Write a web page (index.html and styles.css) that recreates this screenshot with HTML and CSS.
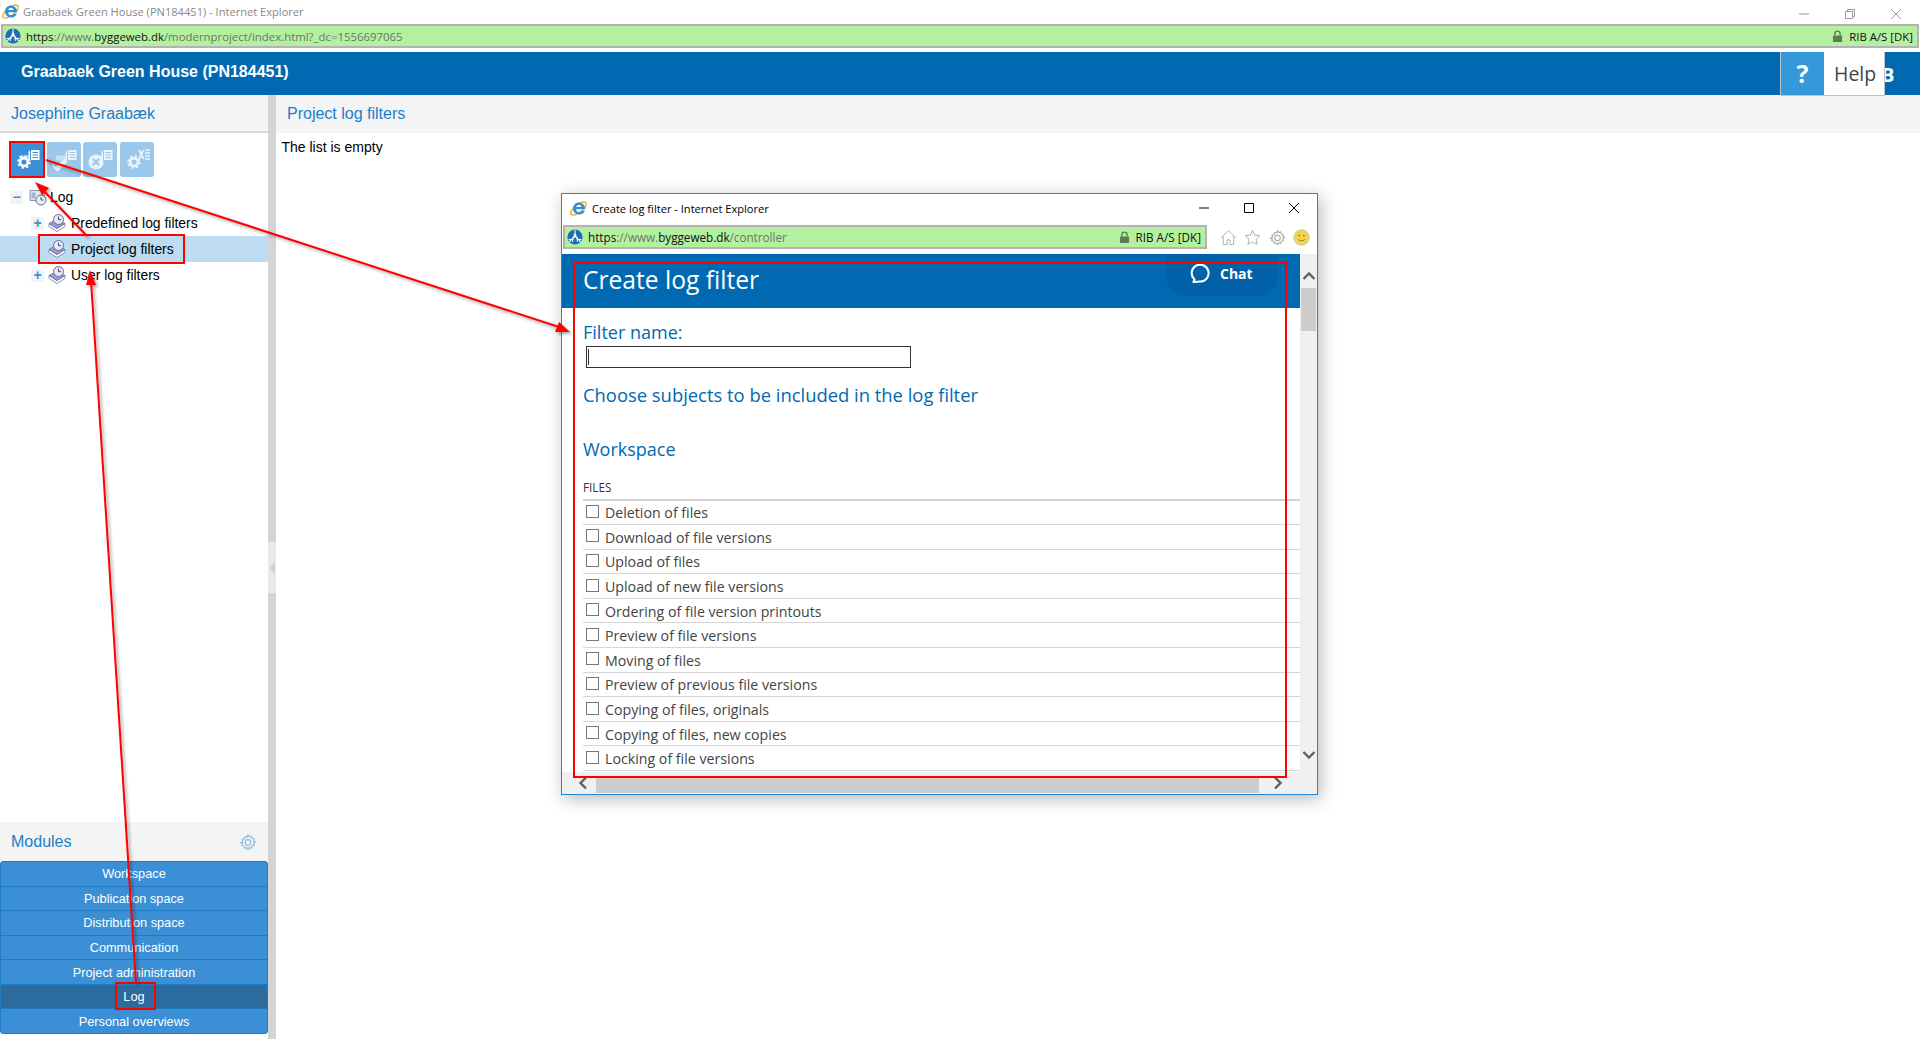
FILE: index.html
```html
<!DOCTYPE html>
<html lang="en">
<head>
<meta charset="utf-8">
<title>Graabaek Green House (PN184451) - Internet Explorer</title>
<link rel="stylesheet" href="styles.css">
</head>
<body>
<svg class="defs" width="0" height="0" aria-hidden="true">
  <defs>
    <symbol id="ie" viewBox="0 0 22 22">
      <ellipse cx="11" cy="11" rx="10.800" ry="4.600" transform="rotate(-38 11 11)" fill="none" stroke="#f0b429" stroke-width="1.700"/>
      <path d="M11.400 4a7.300 7.300 0 0 1 7.300 7.800H8.300c.1 2.100 1.500 3.400 3.400 3.400 1.400 0 2.400-.6 3-1.700h3.700c-.9 2.700-3.500 4.500-6.700 4.500-4.100 0-7-2.900-7-6.900S7.600 4 11.400 4zM8.400 9.300h6c-.2-1.700-1.400-2.700-3-2.700s-2.700 1-3 2.700z" fill="#2f8fd8" fill-rule="evenodd"/>
    </symbol>
    <symbol id="rib" viewBox="0 0 20 20">
      <circle cx="10" cy="10" r="9.500" fill="#1f6fb5"/>
      <path d="M10 1v7L3 16M10 8l7 8M10 5l-3.500 11M10 5l3.500 11M2 13c3 .5 5 .2 8-4 3 4.200 5 4.500 8 4" fill="none" stroke="#fff" stroke-width="1.300"/>
    </symbol>
    <symbol id="cog" viewBox="0 0 20 20">
      <path d="M10 1.800l1.300 2.300 2.500-.7.600 2.500 2.500.6-.7 2.500 2.300 1-2.300 1.300.7 2.500-2.500.6-.6 2.500-2.500-.7-1.300 2.300-1.300-2.300-2.500.7-.6-2.500-2.500-.6.7-2.500L1.800 11l2.300-1.300-.7-2.500 2.500-.6.6-2.500 2.500.7z" fill="none" stroke="currentColor" stroke-width="1.300" stroke-linejoin="round"/>
      <circle cx="10" cy="10.500" r="3.200" fill="none" stroke="currentColor" stroke-width="1.300"/>
    </symbol>
    <symbol id="book" viewBox="0 0 18 18">
      <path d="M1 9.500v3l8 5 8-5v-3l-8 5z" fill="#fff" stroke="#7474a8" stroke-width=".8"/>
      <path d="M1 9.500l7-4 9 4-8 5z" fill="#9c9cd2" stroke="#6a6aa0" stroke-width=".8"/>
      <circle cx="10.500" cy="5.500" r="5" fill="#e8e8f4" stroke="#6a6a9c"/>
      <path d="M10.500 2.500v3.200h2.600" fill="none" stroke="#45457a"/>
    </symbol>
    <symbol id="page" viewBox="0 0 34 34">
      <path d="M18.500 9.500l1.500-1V19l-1.500 1zM21 8h8.500v10H21z" fill="#fff"/>
      <path d="M22.500 10.500h5.500M22.500 13h5.500M22.500 15.500h5.500" stroke="currentColor" stroke-width="1.100"/>
      <path d="M9 13.500h10v5H9z" fill="#fff" opacity=".55"/>
    </symbol>
    <symbol id="gear" viewBox="0 0 34 34">
      <circle cx="14" cy="20" r="5.500" fill="currentColor"/>
      <circle cx="14" cy="20" r="3.900" fill="none" stroke="#fff" stroke-width="2.700"/>
      <circle cx="14" cy="20" r="6" fill="none" stroke="#fff" stroke-width="1.700" stroke-dasharray="2.350 2.360"/>
    </symbol>
  </defs>
</svg>

<div class="app">
  <div class="ie-title">
    <svg class="ie-logo"><use href="#ie"/></svg>
    <span class="ie-title-text">Graabaek Green House (PN184451) - Internet Explorer</span>
    <div class="win-btns">
      <svg class="win-btn" viewBox="0 0 12 12"><path d="M1 6h10" stroke="#999"/></svg>
      <svg class="win-btn" viewBox="0 0 12 12"><path d="M1.500 3.500h7v7h-7zM3.500 3.500v-2h7v7h-2" fill="none" stroke="#999"/></svg>
      <svg class="win-btn" viewBox="0 0 12 12"><path d="M1 1l10 10M11 1L1 11" stroke="#999"/></svg>
    </div>
  </div>
  <div class="addr">
    <svg class="rib-logo"><use href="#rib"/></svg>
    <span class="url"><b>https</b>://www.<b>byggeweb.dk</b>/modernproject/index.html?_dc=1556697065</span>
    <svg class="lock" viewBox="0 0 12 14"><path d="M1 6h10v7H1z" fill="#5d7d50"/><path d="M3.200 6V4a2.800 2.800 0 0 1 5.600 0v2" fill="none" stroke="#5d7d50" stroke-width="1.500"/></svg>
    <span class="cert">RIB A/S [DK]</span>
  </div>
  <header class="top">
    <h1 class="top-title">Graabaek Green House (PN184451)</h1>
    <span class="top-b">B</span>
    <div class="help">
      <span class="help-q">?</span>
      <span class="help-label">Help</span>
    </div>
  </header>

  <div class="main">
    <aside class="side">
      <div class="panel-head side-head">Josephine Graabæk</div>
      <div class="tools">
        <span class="tool tool-on"><svg class="tool-ico"><use href="#page"/><use href="#gear"/></svg></span>
        <span class="tool">
          <svg class="tool-ico tool-off"><use href="#page"/><path d="M8 25.500l9-9 3 3-9 9zM6 22a8 8 0 0 0 5 7" fill="#fff" stroke="#fff"/><path d="M9 24.500l8-8" stroke="currentColor"/></svg>
        </span>
        <span class="tool">
          <svg class="tool-ico tool-off"><use href="#page"/><circle cx="13" cy="20" r="7.500" fill="#fff"/><path d="M9.800 16.800l6.400 6.400M16.200 16.800l-6.400 6.400" stroke="currentColor" stroke-width="2.200"/></svg>
        </span>
        <span class="tool">
          <svg class="tool-ico tool-off"><use href="#gear"/><path d="M19 8l4.500 9M23.500 8L19 17" stroke="#fff" stroke-width="1.800"/><path d="M25 8h5M25 11h5M25 14h5M25 17h5" stroke="#fff" stroke-width="1.500"/></svg>
        </span>
      </div>
      <ul class="tree">
        <li class="node node-root"><span class="exp">−</span><svg class="log-ico" viewBox="0 0 18 18"><path d="M1 2.500h14v10H1z" fill="#dfe6f4" stroke="#8a93b0"/><path d="M2.500 4.500h4v6h-4z" fill="#9fb2dc"/><circle cx="12" cy="12" r="5" fill="#eef2f8" stroke="#5a6a8a"/><path d="M12 9v3h2.500" fill="none" stroke="#36466a"/></svg><span>Log</span></li>
        <li class="node node-sub"><span class="exp">+</span><svg class="book-ico"><use href="#book"/></svg><span>Predefined log filters</span></li>
        <li class="node node-sub node-sel"><span class="exp exp-none"></span><svg class="book-ico"><use href="#book"/></svg><span>Project log filters</span></li>
        <li class="node node-sub"><span class="exp">+</span><svg class="book-ico"><use href="#book"/></svg><span>User log filters</span></li>
      </ul>
      <div class="mod-head">
        <span>Modules</span>
        <svg class="mod-cog"><use href="#cog"/></svg>
      </div>
      <nav class="mods">
        <a class="mod">Workspace</a>
        <a class="mod">Publication space</a>
        <a class="mod">Distribution space</a>
        <a class="mod">Communication</a>
        <a class="mod">Project administration</a>
        <a class="mod mod-on">Log</a>
        <a class="mod">Personal overviews</a>
      </nav>
    </aside>
    <div class="split"><span class="split-notch"><span class="split-arrow"></span></span></div>
    <main class="content">
      <div class="panel-head">Project log filters</div>
      <p class="empty">The list is empty</p>
    </main>
  </div>
</div>

<section class="popup">
  <div class="pop-title">
    <svg class="pop-logo"><use href="#ie"/></svg>
    <span class="pop-title-text">Create log filter - Internet Explorer</span>
    <div class="pop-btns">
      <svg class="pop-btn" viewBox="0 0 12 12"><path d="M1 6h10" stroke="#000"/></svg>
      <svg class="pop-btn" viewBox="0 0 12 12"><path d="M1.500 1.500h9v9h-9z" fill="none" stroke="#000"/></svg>
      <svg class="pop-btn" viewBox="0 0 12 12"><path d="M1 1l10 10M11 1L1 11" stroke="#000"/></svg>
    </div>
  </div>
  <div class="pop-bar">
    <div class="addr pop-addr">
      <svg class="rib-logo"><use href="#rib"/></svg>
      <span class="url"><b>https</b>://www.<b>byggeweb.dk</b>/controller</span>
      <svg class="lock" viewBox="0 0 12 14"><path d="M1 6h10v7H1z" fill="#5d7d50"/><path d="M3.200 6V4a2.800 2.800 0 0 1 5.600 0v2" fill="none" stroke="#5d7d50" stroke-width="1.500"/></svg>
      <span class="cert">RIB A/S [DK]</span>
    </div>
    <div class="pop-tools">
      <svg class="pop-tool" viewBox="0 0 18 18"><path d="M1 9.500L9 2l8 7.500M3.500 8v8.500h4v-5h3v5h4V8" fill="none" stroke="#aaa"/></svg>
      <svg class="pop-tool" viewBox="0 0 18 18"><path d="M9 1.500l2.300 5 5.400.6-4 3.700 1.100 5.400L9 13.500l-4.800 2.700 1.100-5.400-4-3.700 5.400-.6z" fill="none" stroke="#aaa"/></svg>
      <svg class="pop-tool pop-tool-cog"><use href="#cog"/></svg>
      <svg class="pop-tool" viewBox="0 0 18 18"><circle cx="9" cy="9" r="8.200" fill="#f5d34f" stroke="#c9c9a0"/><circle cx="6.500" cy="7" r="1" fill="#8a7a20"/><circle cx="11.500" cy="7" r="1" fill="#8a7a20"/><path d="M5.500 11c1.500 2 5.500 2 7 0" fill="none" stroke="#8a7a20"/></svg>
    </div>
  </div>
  <div class="pop-view">
    <div class="pop-main">
      <div class="pop-head">
        <h2 class="pop-h">Create log filter</h2>
        <div class="chat">
          <svg class="chat-ico" viewBox="0 0 22 22"><path d="M3 21c1.600-.7 2.100-1.900 1.800-3.100A9.300 9.300 0 1 1 11 20.400c-2 0-4.500.6-8 .6z" fill="none" stroke="#fff" stroke-width="2.300"/></svg>
          <span>Chat</span>
        </div>
      </div>
      <div class="pop-body">
        <h3 class="lbl">Filter name:</h3>
        <div class="field"><span class="caret"></span></div>
        <h3 class="lbl lbl-choose">Choose subjects to be included in the log filter</h3>
        <h3 class="lbl lbl-ws">Workspace</h3>
        <div class="group">FILES</div>
        <ul class="rows">
          <li class="row"><span class="box"></span>Deletion of files</li>
          <li class="row"><span class="box"></span>Download of file versions</li>
          <li class="row"><span class="box"></span>Upload of files</li>
          <li class="row"><span class="box"></span>Upload of new file versions</li>
          <li class="row"><span class="box"></span>Ordering of file version printouts</li>
          <li class="row"><span class="box"></span>Preview of file versions</li>
          <li class="row"><span class="box"></span>Moving of files</li>
          <li class="row"><span class="box"></span>Preview of previous file versions</li>
          <li class="row"><span class="box"></span>Copying of files, originals</li>
          <li class="row"><span class="box"></span>Copying of files, new copies</li>
          <li class="row"><span class="box"></span>Locking of file versions</li>
        </ul>
      </div>
    </div>
    <div class="vbar">
      <svg class="chev" viewBox="0 0 14 10"><path d="M1.500 8L7 2.500 12.500 8" fill="none" stroke="#606060" stroke-width="2.400"/></svg>
      <span class="vthumb"></span>
      <svg class="chev chev-end" viewBox="0 0 14 10"><path d="M1.500 2L7 7.500 12.500 2" fill="none" stroke="#606060" stroke-width="2.400"/></svg>
    </div>
    <div class="hbar">
      <svg class="hchev" viewBox="0 0 10 14"><path d="M8 1.500L2.500 7 8 12.500" fill="none" stroke="#606060" stroke-width="2.400"/></svg>
      <span class="hthumb"></span>
      <svg class="hchev" viewBox="0 0 10 14"><path d="M2 1.500L7.500 7 2 12.500" fill="none" stroke="#606060" stroke-width="2.400"/></svg>
    </div>
  </div>
</section>

<svg class="marks" viewBox="0 0 1920 1039" aria-hidden="true">
  <defs>
    <filter id="soft" x="-5%" y="-5%" width="110%" height="110%">
      <feDropShadow dx="2" dy="2" stdDeviation="1.500" flood-color="#000" flood-opacity=".35"/>
    </filter>
  </defs>
  <g fill="none" stroke="#f00" stroke-width="2">
    <rect x="10" y="142" width="34" height="35"/>
    <rect x="39" y="235" width="145" height="28"/>
    <rect x="116" y="983" width="39" height="26"/>
    <rect x="574" y="263" width="712" height="514"/>
  </g>
  <g filter="url(#soft)">
    <path d="M46 160L562 328" stroke="#f00" stroke-width="2" fill="none"/>
    <path d="M570 332L555 332L559 322z" fill="#f00"/>
    <path d="M87 236L41 188" stroke="#f00" stroke-width="2" fill="none"/>
    <path d="M35 182L49 188L42 195z" fill="#f00"/>
    <path d="M136 983L91 280" stroke="#f00" stroke-width="2" fill="none"/>
    <path d="M90 270L96 285L86 285z" fill="#f00"/>
  </g>
</svg>
</body>
</html>
```
FILE: styles.css
```css
* { box-sizing: border-box; }
html, body { margin: 0; height: 100%; overflow: hidden; background: #fff; }
body { position: relative; font-family: "Liberation Sans", Arial, sans-serif; font-size: 14px; color: #000; }
ul { list-style: none; margin: 0; padding: 0; }
h1, h2, h3, p { margin: 0; font-weight: normal; }
.defs { position: absolute; }

.app { display: flex; flex-direction: column; height: 1039px; }

.ie-title { display: flex; align-items: center; height: 24px; padding-left: 1px; flex: none; }
.ie-logo { width: 19px; height: 19px; margin-right: 3px; margin-top: -2px; }
.ie-title-text { font-family: "Open Sans", sans-serif; font-size: 11.100px; color: #888; margin-top: -1px; }
.win-btns { margin-left: auto; display: flex; gap: 34px; padding: 3px 18px 0 0; }
.win-btn { width: 12px; height: 12px; }

.addr { display: flex; align-items: center; height: 24px; flex: none; margin: 0 1px; background: #b4f0a0; border: 2px solid #b3b3b3; font-family: "Open Sans", sans-serif; font-size: 11.400px; color: #5f6f5f; padding-right: 4px; }
.rib-logo { width: 16px; height: 16px; margin: 0 5px 0 2px; flex: none; }
.url { color: #66786a; }
.url b { font-weight: normal; color: #111; }
.lock { width: 11px; height: 13px; margin-left: auto; margin-right: 6px; }
.cert { color: #111; }

.top { display: flex; align-items: stretch; height: 43px; margin-top: 4px; flex: none; background: #0069b1; color: #fff; position: relative; }
.top-title { font-size: 16px; font-weight: bold; padding-left: 21px; line-height: 40px; }
.help { display: flex; margin-left: auto; margin-right: 35px; height: 44px; border: solid #c4c4c4; border-width: 0 1px 1px 1px; background: #fff; position: relative; z-index: 1; }
.help-q { width: 43px; background: #3498db; font-family: "Open Sans", sans-serif; font-size: 25px; font-weight: bold; text-align: center; line-height: 43px; }
.help-label { width: 60px; font-family: "Open Sans", sans-serif; font-size: 19.500px; color: #444; line-height: 44px; padding-left: 10px; }
.top-b { position: absolute; left: 1881px; top: 9px; font-family: "Open Sans", sans-serif; font-size: 20px; font-weight: bold; line-height: 28px; }

.main { display: flex; flex: 1; min-height: 0; }
.side { width: 268px; flex: none; display: flex; flex-direction: column; }
.split { width: 8px; flex: none; background: #d4d4d4; position: relative; }
.split-notch { position: absolute; top: 447px; left: 0; width: 8px; height: 51px; background: #e8e8e8; display: flex; align-items: center; justify-content: center; }
.split-arrow { width: 0; height: 0; border-style: solid; border-width: 6px 5px 6px 0; border-color: transparent #cfcfcf transparent transparent; }
.content { flex: 1; min-width: 0; }

.panel-head { height: 38px; background: #f4f4f4; color: #1a7fc8; font-size: 16px; line-height: 38px; padding-left: 11px; }
.side-head { border-bottom: 2px solid #d8d8d8; }
.empty { padding: 6px 6px 6px 5.500px; font-size: 14px; line-height: 16px; }

.tools { display: flex; gap: 2.500px; padding: 9px 0 0 10px; }
.tool { width: 34px; height: 35px; background: #9ac7ea; border-radius: 3px; display: flex; color: #9ac7ea; }
.tool-on { background: #3a8fd5; color: #3a8fd5; border-radius: 0; }
.tool-ico { width: 34px; height: 34px; }
.tool-off { opacity: .8; }

.tree { padding-top: 7px; }
.node { display: flex; align-items: center; height: 26px; font-size: 13.900px; }
.node-root { padding-left: 10px; }
.node-sub { padding-left: 31px; }
.node-sel { background: #bddbf1; }
.exp { width: 13px; height: 13px; background: #f3f3f3; color: #3a8fd5; font-size: 14px; line-height: 12px; text-align: center; font-weight: bold; flex: none; margin-right: 4px; }
.exp-none { background: none; }
.log-ico { width: 18px; height: 18px; margin: 0 3px 0 2px; flex: none; }
.book-ico { width: 18px; height: 18px; margin-right: 5px; flex: none; }

.mod-head { margin-top: auto; height: 39px; background: #f4f4f4; color: #1a7fc8; font-size: 16px; display: flex; align-items: center; justify-content: space-between; padding: 0 11px 0 11px; flex: none; }
.mod-cog { width: 18px; height: 18px; color: #8fbbe0; }
.mods { display: flex; flex-direction: column; height: 173px; margin-bottom: 5px; flex: none; border: 1px solid #1f7cc4; border-radius: 3px; background: #3a8fd5; }
.mod { flex: 1; display: flex; align-items: center; justify-content: center; color: #fff; font-size: 12.750px; border-top: 1px solid #1f7cc4; }
.mod:first-child { border-top: 0; }
.mod-on { background: #2b6b9e; }

.popup { position: absolute; left: 561px; top: 193px; width: 757px; height: 602px; background: #fff; border: 1px solid #1e88d8; box-shadow: 3px 4px 16px rgba(0,0,0,.28); display: flex; flex-direction: column; font-family: "Open Sans", sans-serif; }
.pop-title { display: flex; align-items: center; height: 31px; flex: none; padding-left: 7px; }
.pop-logo { width: 19px; height: 19px; margin-right: 4px; margin-top: -3px; }
.pop-title-text { font-size: 11.100px; color: #000; margin-top: -3px; }
.pop-btns { margin-left: auto; display: flex; gap: 33px; padding: 0 17px 3px 0; }
.pop-btn { width: 12px; height: 12px; }
.pop-bar { display: flex; align-items: center; height: 24px; flex: none; }
.pop-addr { width: 644px; height: 24px; margin: 0 0 0 1px; font-size: 11.700px; }
.pop-tools { display: flex; gap: 7.500px; padding-left: 12.500px; }
.pop-tool { width: 17px; height: 17px; }
.pop-tool-cog { color: #aaa; }
.pop-view { flex: 1; min-height: 0; margin-top: 5px; display: grid; grid-template-columns: 738px 17px; grid-template-rows: 518px 22px; }
.pop-main { overflow: hidden; }
.pop-head { height: 54px; background: #0069b1; color: #fff; position: relative; padding-left: 21px; }
.pop-h { font-size: 24.600px; line-height: 52px; }
.chat { position: absolute; left: 604px; top: 0; width: 112px; height: 42px; padding: 0 0 4px 24px; background: #0060a8; border-radius: 0 0 21px 21px; color: #fff; font-weight: bold; font-size: 14px; display: flex; align-items: center; gap: 10px; }
.chat-ico { width: 20px; height: 20px; }
.pop-body { padding: 11.500px 0 0 21px; }
.lbl { color: #0069b1; font-size: 18px; line-height: 24px; }
.field { width: 325px; height: 22px; margin: 2.500px 0 0 3px; border: 1px solid #333; padding: 2px 1px; }
.caret { display: block; width: 1px; height: 16px; background: #333; }
.lbl-choose { margin-top: 15px; font-size: 18.400px; }
.lbl-ws { margin-top: 30px; }
.group { margin-top: 16.500px; font-size: 11.700px; color: #333; line-height: 18px; height: 23px; border-bottom: 2px solid #d4d4d4; }
.row { display: flex; align-items: center; height: 24.600px; padding: 1px 0 0 3px; border-bottom: 1px solid #d6d6d6; font-size: 14.200px; color: #444; }
.box { width: 13px; height: 13px; border: 1px solid #777; margin-right: 6px; flex: none; margin-top: -3px; }
.vbar { background: #f0f0f0; display: flex; flex-direction: column; align-items: center; position: relative; }
.chev { width: 14px; height: 10px; margin-top: 16.500px; flex: none; }
.chev-end { margin-top: auto; margin-bottom: 12px; }
.vthumb { position: absolute; top: 34px; left: 1px; width: 15px; height: 43px; background: #cdcdcd; }
.hbar { grid-column: 1 / 3; background: #f0f0f0; display: flex; align-items: center; padding-left: 16px; }
.hchev { width: 10px; height: 14px; flex: none; }
.hthumb { width: 663px; height: 16px; margin: 0 14px 1px 8px; background: #cdcdcd; align-self: flex-end; }

.marks { position: absolute; left: 0; top: 0; width: 1920px; height: 1039px; pointer-events: none; }
```
